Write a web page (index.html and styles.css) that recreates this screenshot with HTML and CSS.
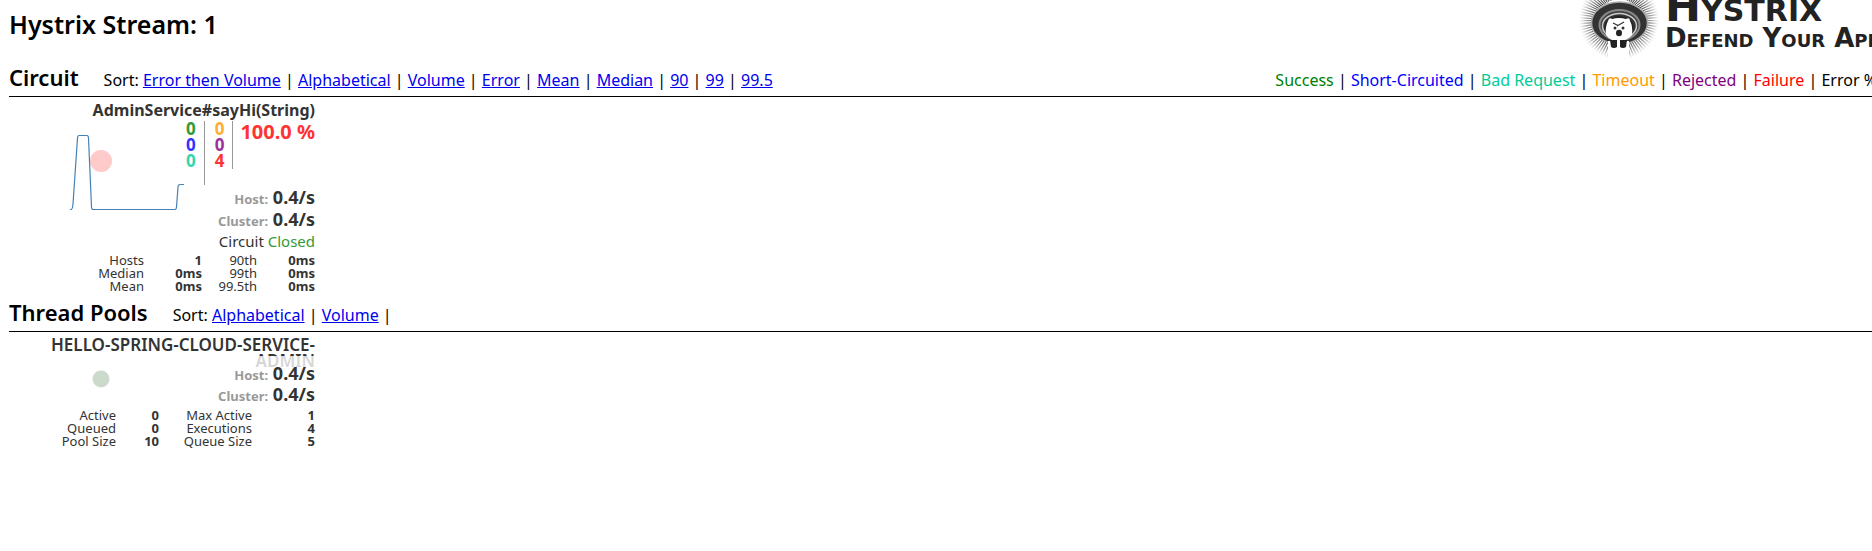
FILE: index.html
```html
<!DOCTYPE html>
<html lang="en">
<head>
<meta charset="utf-8">
<title>Hystrix Monitor</title>
<link rel="stylesheet" href="styles.css">
</head>
<body>
<header class="header">
  <h1 class="title">Hystrix Stream: 1</h1>
  <div class="logo">
    <svg class="logo-mark" viewBox="0 0 90 60" width="90" height="60" aria-hidden="true">
      <defs>
        <radialGradient id="fade" gradientUnits="userSpaceOnUse" cx="44" cy="20" r="40">
          <stop offset="0.6" stop-color="#333"/>
          <stop offset="0.8" stop-color="#777" stop-opacity="0.7"/>
          <stop offset="1" stop-color="#999" stop-opacity="0"/>
        </radialGradient>
      </defs>
      <circle cx="44" cy="20" r="31" fill="none" stroke="url(#fade)" stroke-width="20" stroke-dasharray="1.2 1.2"/>
      <ellipse cx="44.500" cy="23" rx="28" ry="21" fill="#333" stroke="#aaa" stroke-width="1.500"/>
      <ellipse cx="44.500" cy="25" rx="20" ry="15" fill="#444" stroke="#888" stroke-width="2"/>
      <ellipse cx="44.500" cy="26" rx="17" ry="12.500" fill="#333" stroke="#ccc" stroke-width="1.500"/>
      <ellipse cx="44" cy="28" rx="14.500" ry="12" fill="#222"/>
      <path d="M33 60V41H54V60Z" fill="#fff"/>
      <path d="M31 35C30 28 32 23 33 21Q34 17 37 19Q44 17 51 19Q55 17 55 21Q58 26 57 35Q52 41 44 41Q35 41 31 35Z" fill="#fff"/>
      <path d="M35 40h7v7q-3 2-6 0zM45 40h7l-1 7q-3 2-6 0z" fill="#222"/>
      <path d="M38 23l5 2.500M49 22l-7 4" stroke="#333" stroke-width="1.200" fill="none"/>
      <circle cx="40" cy="28" r="1.500" fill="#333"/>
      <circle cx="48" cy="28" r="1.500" fill="#333"/>
      <ellipse cx="44" cy="33" rx="3" ry="3.200" fill="#222"/>
    </svg>
    <div class="logo-text">
      <div class="logo-name">Hystrix</div>
      <div class="logo-tagline">Defend Your App</div>
    </div>
  </div>
</header>

<main>
<section>
  <div class="bar">
    <h2 class="bar-title">Circuit</h2>
    <nav class="sort">Sort: <a href="#">Error then Volume</a> | <a href="#">Alphabetical</a> | <a href="#">Volume</a> | <a href="#">Error</a> | <a href="#">Mean</a> | <a href="#">Median</a> | <a href="#">90</a> | <a href="#">99</a> | <a href="#">99.5</a></nav>
    <div class="legend"><span class="success">Success</span> | <span class="short">Short-Circuited</span> | <span class="bad">Bad Request</span> | <span class="timeout">Timeout</span> | <span class="rejected">Rejected</span> | <span class="failure">Failure</span> | <span>Error %</span></div>
  </div>
  <article class="monitor circuit">
    <svg class="chart" viewBox="0 0 140 120" width="140" height="120" aria-hidden="true">
      <circle cx="43" cy="61" r="11" fill="#ffcaca"/>
      <path d="M12 109.500H13Q14.500 109.500 15 104L19.500 38Q19.700 35.500 21 35.500H29Q30.300 35.500 30.500 38L33.500 107Q33.600 109.500 35 109.500H117Q118.300 109.500 118.500 107L120 87Q120.200 84.500 122 84.500H126" fill="none" stroke="#4682b4" stroke-width="1.200"/>
    </svg>
    <h3 class="name">AdminService#sayHi(String)</h3>
    <div class="counters">
      <div class="counts counts-first"><span class="success">0</span><span class="short">0</span><span class="bad">0</span></div>
      <div class="counts counts-second"><span class="timeout">0</span><span class="rejected">0</span><span class="failure">4</span></div>
      <div class="error-rate failure">100.0 %</div>
    </div>
    <div class="rate"><span class="rate-label">Host:</span> 0.4/s</div>
    <div class="rate"><span class="rate-label">Cluster:</span> 0.4/s</div>
    <div class="status">Circuit <span class="success">Closed</span></div>
    <table class="stats circuit-stats">
      <tr><th>Hosts</th><td>1</td><th>90th</th><td>0ms</td></tr>
      <tr><th>Median</th><td>0ms</td><th>99th</th><td>0ms</td></tr>
      <tr><th>Mean</th><td>0ms</td><th>99.5th</th><td>0ms</td></tr>
    </table>
  </article>
</section>

<section>
  <div class="bar">
    <h2 class="bar-title">Thread Pools</h2>
    <nav class="sort">Sort: <a href="#">Alphabetical</a> | <a href="#">Volume</a> |</nav>
  </div>
  <article class="monitor pool">
    <svg class="chart" viewBox="0 0 140 80" width="140" height="80" aria-hidden="true">
      <circle cx="43" cy="44" r="8.500" fill="#ccdacc"/>
    </svg>
    <h3 class="name pool-name">HELLO-SPRING-CLOUD-SERVICE-ADMIN</h3>
    <div class="pool-rates">
      <div class="rate"><span class="rate-label">Host:</span> 0.4/s</div>
      <div class="rate"><span class="rate-label">Cluster:</span> 0.4/s</div>
    </div>
    <table class="stats pool-stats">
      <tr><th>Active</th><td>0</td><th>Max Active</th><td>1</td></tr>
      <tr><th>Queued</th><td>0</td><th>Executions</th><td>4</td></tr>
      <tr><th>Pool Size</th><td>10</td><th>Queue Size</th><td>5</td></tr>
    </table>
  </article>
</section>
</main>
</body>
</html>
```
FILE: styles.css
```css
body {
  margin: 0 0 0 9px;
  font: 16px/22px "Noto Sans", sans-serif;
  color: #000;
  background: #fff;
  overflow: hidden;
}

h1, h2, h3 { margin: 0; font-weight: 600; }

.header {
  display: flex;
  justify-content: space-between;
  height: 60px;
}
.title { font-size: 25px; line-height: 48px; }

.logo { display: flex; flex: 0 0 297px; min-width: 0; height: 60px; }
.logo-mark { flex: none; }
.logo-text {
  font-family: "DejaVu Sans", sans-serif;
  font-variant: small-caps;
  white-space: nowrap;
  color: #222;
}
.logo-name { font-size: 43px; font-weight: 700; line-height: 12px; }
.logo-tagline { font-size: 26px; font-weight: 700; line-height: 52px; }

.bar {
  display: flex;
  align-items: baseline;
  height: 36px;
  border-bottom: 1px solid #000;
  white-space: nowrap;
}
.bar-title { margin-right: 25px; font-size: 22px; line-height: 34px; }
.sort a { color: #00e; }
.legend { margin: 0 -5px 0 auto; }

.success { color: #008000; }
.short { color: #00f; }
.bad { color: #00cc99; }
.timeout { color: #ff9900; }
.rejected { color: #800080; }
.failure { color: #f00; }

.monitor {
  position: relative;
  width: 306px;
  color: #333;
  text-align: right;
}
.monitor .success { color: #339933; }
.monitor .short { color: #3333ff; }
.monitor .bad { color: #33d6ad; }
.monitor .timeout { color: #ffad33; }
.monitor .rejected { color: #993399; }
.monitor .failure { color: #ff3333; }

.chart { position: absolute; left: 49px; top: 3px; }
.circuit { padding-top: 2px; }
.name { font-size: 16px; line-height: 22px; font-weight: 700; }

.counters {
  display: flex;
  justify-content: flex-end;
  height: 65px;
  font-weight: 700;
}
.counts {
  display: flex;
  flex-direction: column;
  font-size: 17px;
  line-height: 16px;
  padding-right: 8px;
  border-right: 1px solid #999;
}
.counts-first { height: 64px; }
.counts-second { height: 48px; padding-left: 10px; }
.error-rate { padding-left: 7px; font-size: 20px; }

.rate { font-size: 18px; line-height: 22px; font-weight: 700; }
.rate-label { font-size: 13px; line-height: 13px; color: #999; }
.status { font-size: 15px; line-height: 22px; }

.stats {
  width: 100%;
  table-layout: fixed;
  border-collapse: collapse;
  font-size: 13px;
  line-height: 13px;
}
.stats th { padding: 0; font-weight: 400; text-align: right; }
.stats td { padding: 0; font-weight: 700; }
.circuit-stats { margin: 2px 0; }
.circuit-stats th:first-child { width: 135px; }
.circuit-stats td:nth-child(2) { width: 58px; }
.circuit-stats th:nth-child(3) { width: 55px; }

.pool { padding-top: 5px; }
.pool-name { height: 19px; font-size: 17px; line-height: 16px; font-weight: 600; }
.pool-rates {
  position: relative;
  margin-left: 140px;
  padding-top: 7px;
  background: rgba(255, 255, 255, 0.8);
}
.pool-rates .rate { line-height: 21px; }
.pool-stats { margin-top: 4px; }
.pool-stats th:first-child { width: 107px; }
.pool-stats td:nth-child(2) { width: 43px; }
.pool-stats th:nth-child(3) { width: 93px; }
```
